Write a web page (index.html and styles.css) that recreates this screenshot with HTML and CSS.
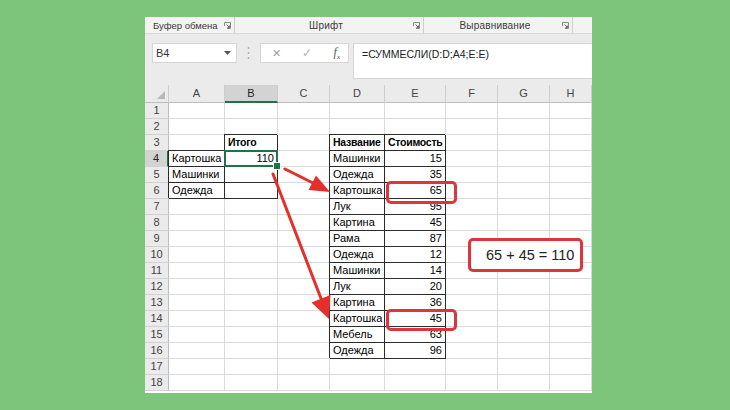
FILE: index.html
```html
<!DOCTYPE html>
<html lang="ru">
<head>
<meta charset="utf-8">
<title>СУММЕСЛИ</title>
<link rel="stylesheet" href="styles.css">
</head>
<body>
<div class="stage">
  <div class="excel">
    <div class="ribbon">
      <div class="grp g1"><span>Буфер обмена</span><svg class="launch" viewBox="0 0 7 7"><path d="M0.5 4V0.5H6.5V6.5H3" fill="none" stroke="#8a8a8a" stroke-width="1"/><path d="M2.5 2.5L5.5 5.5M5.5 3.5V5.5H3.5" fill="none" stroke="#6a6a6a" stroke-width="1"/></svg></div>
      <div class="grp g2"><span>Шрифт</span><svg class="launch" viewBox="0 0 7 7"><path d="M0.5 4V0.5H6.5V6.5H3" fill="none" stroke="#8a8a8a" stroke-width="1"/><path d="M2.5 2.5L5.5 5.5M5.5 3.5V5.5H3.5" fill="none" stroke="#6a6a6a" stroke-width="1"/></svg></div>
      <div class="grp g3"><span>Выравнивание</span><svg class="launch" viewBox="0 0 7 7"><path d="M0.5 4V0.5H6.5V6.5H3" fill="none" stroke="#8a8a8a" stroke-width="1"/><path d="M2.5 2.5L5.5 5.5M5.5 3.5V5.5H3.5" fill="none" stroke="#6a6a6a" stroke-width="1"/></svg></div>
      <div class="grp g4"></div>
    </div>
    <div class="fbar">
      <div class="namebox"><span>B4</span><svg class="caret" viewBox="0 0 7 4"><path d="M0 0H7L3.5 4Z" fill="#555"/></svg></div>
      <div class="dots"><svg viewBox="0 0 3 14" width="3" height="14"><circle cx="1.5" cy="2" r="0.9" fill="#a8a8a8"/><circle cx="1.5" cy="7" r="0.9" fill="#a8a8a8"/><circle cx="1.5" cy="12" r="0.9" fill="#a8a8a8"/></svg></div>
      <div class="fbtns"><span class="x">✕</span><span class="ok">✓</span><span class="fx">f<sub>x</sub></span></div>
      <div class="finput">=СУММЕСЛИ(D:D;A4;E:E)</div>
    </div>
    <div class="grid">
      <div class="c h corner"></div><div class="c h">A</div><div class="c h sel-h">B</div><div class="c h">C</div><div class="c h">D</div><div class="c h">E</div><div class="c h">F</div><div class="c h">G</div><div class="c h">H</div>

      <div class="c rh">1</div><div class="c"></div><div class="c"></div><div class="c"></div><div class="c"></div><div class="c"></div><div class="c"></div><div class="c"></div><div class="c"></div>
      <div class="c rh">2</div><div class="c"></div><div class="c"></div><div class="c"></div><div class="c"></div><div class="c"></div><div class="c"></div><div class="c"></div><div class="c"></div>
      <div class="c rh">3</div><div class="c"></div><div class="c t b">Итого</div><div class="c"></div><div class="c t b">Название</div><div class="c t b">Стоимость</div><div class="c"></div><div class="c"></div><div class="c"></div>
      <div class="c rh sel-r">4</div><div class="c t">Картошка</div><div class="c t n active">110</div><div class="c"></div><div class="c t">Машинки</div><div class="c t n">15</div><div class="c"></div><div class="c"></div><div class="c"></div>
      <div class="c rh">5</div><div class="c t">Машинки</div><div class="c t"></div><div class="c"></div><div class="c t">Одежда</div><div class="c t n">35</div><div class="c"></div><div class="c"></div><div class="c"></div>
      <div class="c rh">6</div><div class="c t">Одежда</div><div class="c t"></div><div class="c"></div><div class="c t">Картошка</div><div class="c t n">65</div><div class="c"></div><div class="c"></div><div class="c"></div>
      <div class="c rh">7</div><div class="c"></div><div class="c"></div><div class="c"></div><div class="c t">Лук</div><div class="c t n">95</div><div class="c"></div><div class="c"></div><div class="c"></div>
      <div class="c rh">8</div><div class="c"></div><div class="c"></div><div class="c"></div><div class="c t">Картина</div><div class="c t n">45</div><div class="c"></div><div class="c"></div><div class="c"></div>
      <div class="c rh">9</div><div class="c"></div><div class="c"></div><div class="c"></div><div class="c t">Рама</div><div class="c t n">87</div><div class="c"></div><div class="c"></div><div class="c"></div>
      <div class="c rh">10</div><div class="c"></div><div class="c"></div><div class="c"></div><div class="c t">Одежда</div><div class="c t n">12</div><div class="c"></div><div class="c"></div><div class="c"></div>
      <div class="c rh">11</div><div class="c"></div><div class="c"></div><div class="c"></div><div class="c t">Машинки</div><div class="c t n">14</div><div class="c"></div><div class="c"></div><div class="c"></div>
      <div class="c rh">12</div><div class="c"></div><div class="c"></div><div class="c"></div><div class="c t">Лук</div><div class="c t n">20</div><div class="c"></div><div class="c"></div><div class="c"></div>
      <div class="c rh">13</div><div class="c"></div><div class="c"></div><div class="c"></div><div class="c t">Картина</div><div class="c t n">36</div><div class="c"></div><div class="c"></div><div class="c"></div>
      <div class="c rh">14</div><div class="c"></div><div class="c"></div><div class="c"></div><div class="c t">Картошка</div><div class="c t n">45</div><div class="c"></div><div class="c"></div><div class="c"></div>
      <div class="c rh">15</div><div class="c"></div><div class="c"></div><div class="c"></div><div class="c t">Мебель</div><div class="c t n">63</div><div class="c"></div><div class="c"></div><div class="c"></div>
      <div class="c rh">16</div><div class="c"></div><div class="c"></div><div class="c"></div><div class="c t">Одежда</div><div class="c t n">96</div><div class="c"></div><div class="c"></div><div class="c"></div>
      <div class="c rh">17</div><div class="c"></div><div class="c"></div><div class="c"></div><div class="c"></div><div class="c"></div><div class="c"></div><div class="c"></div><div class="c"></div>
      <div class="c rh">18</div><div class="c"></div><div class="c"></div><div class="c"></div><div class="c"></div><div class="c"></div><div class="c"></div><div class="c"></div><div class="c"></div>
    </div>
  </div>

  <div class="mark m1"></div>
  <div class="mark m2"></div>
  <div class="mark m3">65 + 45 = 110</div>

  <svg class="arrows" width="730" height="410" viewBox="0 0 730 410">
    <line x1="285" y1="169" x2="313" y2="183" stroke="#e3302c" stroke-width="3" stroke-linecap="round"/>
    <path d="M330 192L308.5 190L316 175.5Z" fill="#e3302c"/>
    <line x1="273" y1="174" x2="322" y2="301" stroke="#e3302c" stroke-width="3" stroke-linecap="round"/>
    <path d="M329 319L311.5 302.5L330.5 295Z" fill="#e3302c"/>
  </svg>
</div>
</body>
</html>
```

FILE: styles.css
```css
* {
  box-sizing: border-box;
  margin: 0;
  padding: 0;
}

html,
body {
  width: 730px;
  height: 410px;
  overflow: hidden;
}

body {
  background: #7cc57a;
  font-family: "Liberation Sans", Arial, sans-serif;
}

.stage {
  position: relative;
  width: 730px;
  height: 410px;
  padding: 17px 0 0 145px;
}

.excel {
  width: 447px;
  height: 376px;
  background: #ffffff;
  display: flex;
  flex-direction: column;
}

/* ribbon group labels */
.ribbon {
  height: 17px;
  flex: none;
  background: #f3f3f3;
  display: flex;
  border-bottom: 1px solid #d9d9d9;
  font-size: 10px;
  letter-spacing: 0.2px;
  color: #3a3a3a;
}

.grp {
  display: flex;
  align-items: center;
  border-right: 1px solid #cfcfcf;
  padding: 0 3px 0 4px;
}

.grp span {
  flex: 1;
  text-align: center;
}

.g1 {
  width: 90px;
  padding-left: 8px;
}

.g1 span {
  text-align: left;
  font-size: 9.5px;
  letter-spacing: 0;
}

.g2 { width: 189px; }
.g3 { width: 149px; }
.g4 { flex: 1; border-right: 0; }

.launch {
  width: 7px;
  height: 7px;
  flex: none;
}

/* formula bar */
.fbar {
  height: 51px;
  flex: none;
  background: #ebebeb;
  display: flex;
  align-items: flex-start;
  padding: 9px 0 0 7px;
}

.namebox {
  width: 85px;
  height: 20px;
  background: #ffffff;
  border: 1px solid #d6d6d6;
  display: flex;
  align-items: center;
  padding: 0 5px 0 3px;
  font-size: 11px;
  color: #333;
}

.namebox span {
  flex: 1;
}

.caret {
  width: 7px;
  height: 4px;
}

.dots {
  width: 23px;
  height: 20px;
  display: flex;
  align-items: center;
  justify-content: center;
}

.fbtns {
  width: 89px;
  height: 20px;
  background: #ffffff;
  border: 1px solid #d6d6d6;
  display: flex;
  align-items: center;
  justify-content: space-between;
  padding: 0 8px 0 11px;
  color: #a0a0a0;
}

.fbtns .x {
  font-size: 11px;
}

.fbtns .ok {
  font-size: 12px;
  color: #b5b5b5;
}

.fbtns .fx {
  font-family: "Liberation Serif", serif;
  font-style: italic;
  font-size: 12px;
  color: #555;
}

.fbtns .fx sub {
  font-size: 7px;
}

.finput {
  flex: 1;
  height: 36px;
  margin-left: 4px;
  background: #ffffff;
  border: 1px solid #d6d6d6;
  border-right: 0;
  padding: 3px 8px;
  font-size: 10.5px;
  line-height: 14px;
  color: #222;
}

/* grid */
.grid {
  display: grid;
  grid-template-columns: 24px 56px 53px 52px 55px 61px 52px 52px 1fr;
  grid-template-rows: 18px repeat(18, 16px);
}

.c {
  border-right: 1px solid #dadada;
  border-bottom: 1px solid #dadada;
  font-size: 11px;
  line-height: 15px;
  padding: 0 3px;
  white-space: nowrap;
  color: #000;
}

.h {
  background: #ebebeb;
  border-right-color: #cdcdcd;
  border-bottom-color: #bdbdbd;
  text-align: center;
  color: #444;
  line-height: 17px;
}

.corner {
  position: relative;
}

.corner::after {
  content: "";
  position: absolute;
  right: 3px;
  bottom: 3px;
  border-left: 8px solid transparent;
  border-bottom: 8px solid #b8b8b8;
}

.rh {
  background: #ebebeb;
  border-right-color: #bdbdbd;
  border-bottom-color: #d2d2d2;
  text-align: center;
  color: #444;
  padding: 0;
}

.sel-h {
  background: #d3d3d3;
  border-bottom: 2px solid #217346;
  color: #222;
  line-height: 16px;
}

.sel-r {
  background: #d3d3d3;
  border-right: 2px solid #217346;
  color: #222;
}

.t {
  border-right-color: #2b2b2b;
  border-bottom-color: #2b2b2b;
  box-shadow: -1px -1px 0 #2b2b2b;
}

.b {
  font-weight: bold;
  font-size: 10.5px;
  letter-spacing: -0.25px;
}

.n {
  text-align: right;
}

.active {
  position: relative;
}

.active::after {
  content: "";
  position: absolute;
  left: -1px;
  top: -1px;
  right: -1px;
  bottom: -1px;
  border: 2px solid #217346;
  z-index: 2;
}

.active::before {
  content: "";
  position: absolute;
  right: -4px;
  bottom: -4px;
  width: 6px;
  height: 6px;
  background: #217346;
  border: 1px solid #ffffff;
  z-index: 3;
}

/* annotations */
.mark {
  position: absolute;
  border: 3px solid #dc353b;
  border-radius: 5px;
}

.m1 {
  left: 386px;
  top: 181px;
  width: 71px;
  height: 23px;
}

.m2 {
  left: 386px;
  top: 309px;
  width: 71px;
  height: 22px;
}

.m3 {
  left: 468px;
  top: 238px;
  width: 115px;
  height: 34px;
  display: flex;
  align-items: center;
  padding-left: 15px;
  background: #ffffff;
  font-size: 14.5px;
  color: #222;
}

.arrows {
  position: absolute;
  left: 0;
  top: 0;
  pointer-events: none;
}
```
